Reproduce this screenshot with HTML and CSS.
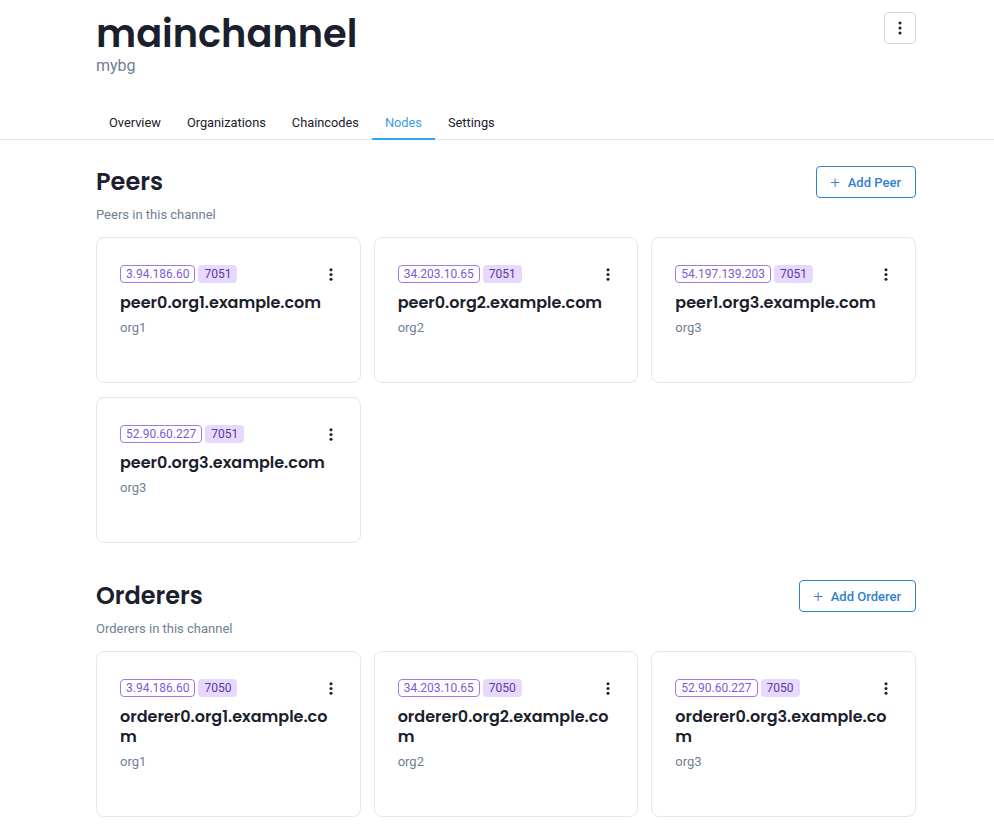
FILE: index.html
```html
<!DOCTYPE html>
<html>
<head>
<meta charset="utf-8">
<link rel="stylesheet" href="styles.css">
</head>
<body>
<header class="page-head">
  <div class="wrap head-row">
    <div>
      <h1 class="title">mainchannel</h1>
      <div class="subtitle">mybg</div>
    </div>
    <button class="menu-btn" aria-label="menu">
      <svg width="4" height="14" viewBox="0 0 4 14"><circle cx="2" cy="2" r="1.5" fill="#1a202c"/><circle cx="2" cy="7" r="1.5" fill="#1a202c"/><circle cx="2" cy="12" r="1.5" fill="#1a202c"/></svg>
    </button>
  </div>
  <nav class="tabs-bar">
    <div class="wrap tabs">
      <a class="tab">Overview</a>
      <a class="tab">Organizations</a>
      <a class="tab">Chaincodes</a>
      <a class="tab active">Nodes</a>
      <a class="tab">Settings</a>
    </div>
  </nav>
</header>

<main class="wrap">
  <section class="section">
    <div class="section-head">
      <div>
        <h2 class="section-title">Peers</h2>
        <div class="section-sub">Peers in this channel</div>
      </div>
      <button class="add-btn"><span class="plus">+</span>Add Peer</button>
    </div>
    <div class="grid">
      <div class="card">
        <div class="card-top"><div class="badges"><span class="badge-ip">3.94.186.60</span><span class="badge-port">7051</span></div><span class="kebab"><svg width="4" height="13" viewBox="0 0 4 13"><circle cx="2" cy="1.7" r="1.5"/><circle cx="2" cy="6.5" r="1.5"/><circle cx="2" cy="11.3" r="1.5"/></svg></span></div>
        <div class="node-name">peer0.org1.example.com</div>
        <div class="node-org">org1</div>
      </div>
      <div class="card">
        <div class="card-top"><div class="badges"><span class="badge-ip">34.203.10.65</span><span class="badge-port">7051</span></div><span class="kebab"><svg width="4" height="13" viewBox="0 0 4 13"><circle cx="2" cy="1.7" r="1.5"/><circle cx="2" cy="6.5" r="1.5"/><circle cx="2" cy="11.3" r="1.5"/></svg></span></div>
        <div class="node-name">peer0.org2.example.com</div>
        <div class="node-org">org2</div>
      </div>
      <div class="card">
        <div class="card-top"><div class="badges"><span class="badge-ip">54.197.139.203</span><span class="badge-port">7051</span></div><span class="kebab"><svg width="4" height="13" viewBox="0 0 4 13"><circle cx="2" cy="1.7" r="1.5"/><circle cx="2" cy="6.5" r="1.5"/><circle cx="2" cy="11.3" r="1.5"/></svg></span></div>
        <div class="node-name">peer1.org3.example.com</div>
        <div class="node-org">org3</div>
      </div>
      <div class="card">
        <div class="card-top"><div class="badges"><span class="badge-ip">52.90.60.227</span><span class="badge-port">7051</span></div><span class="kebab"><svg width="4" height="13" viewBox="0 0 4 13"><circle cx="2" cy="1.7" r="1.5"/><circle cx="2" cy="6.5" r="1.5"/><circle cx="2" cy="11.3" r="1.5"/></svg></span></div>
        <div class="node-name">peer0.org3.example.com</div>
        <div class="node-org">org3</div>
      </div>
    </div>
  </section>

  <section class="section">
    <div class="section-head">
      <div>
        <h2 class="section-title">Orderers</h2>
        <div class="section-sub">Orderers in this channel</div>
      </div>
      <button class="add-btn"><span class="plus">+</span>Add Orderer</button>
    </div>
    <div class="grid">
      <div class="card">
        <div class="card-top"><div class="badges"><span class="badge-ip">3.94.186.60</span><span class="badge-port">7050</span></div><span class="kebab"><svg width="4" height="13" viewBox="0 0 4 13"><circle cx="2" cy="1.7" r="1.5"/><circle cx="2" cy="6.5" r="1.5"/><circle cx="2" cy="11.3" r="1.5"/></svg></span></div>
        <div class="node-name">orderer0.org1.example.com</div>
        <div class="node-org">org1</div>
      </div>
      <div class="card">
        <div class="card-top"><div class="badges"><span class="badge-ip">34.203.10.65</span><span class="badge-port">7050</span></div><span class="kebab"><svg width="4" height="13" viewBox="0 0 4 13"><circle cx="2" cy="1.7" r="1.5"/><circle cx="2" cy="6.5" r="1.5"/><circle cx="2" cy="11.3" r="1.5"/></svg></span></div>
        <div class="node-name">orderer0.org2.example.com</div>
        <div class="node-org">org2</div>
      </div>
      <div class="card">
        <div class="card-top"><div class="badges"><span class="badge-ip">52.90.60.227</span><span class="badge-port">7050</span></div><span class="kebab"><svg width="4" height="13" viewBox="0 0 4 13"><circle cx="2" cy="1.7" r="1.5"/><circle cx="2" cy="6.5" r="1.5"/><circle cx="2" cy="11.3" r="1.5"/></svg></span></div>
        <div class="node-name">orderer0.org3.example.com</div>
        <div class="node-org">org3</div>
      </div>
    </div>
  </section>
</main>
</body>
</html>
```

FILE: styles.css
```css
* { box-sizing: border-box; }
html, body { margin: 0; padding: 0; background: #fff; }
body {
  font-family: Roboto, "Liberation Sans", sans-serif;
  color: #1a202c;
}
.wrap {
  padding-left: 96px;
  padding-right: 78px;
}
.head-row {
  display: flex;
  justify-content: space-between;
  align-items: flex-start;
  padding-top: 11px;
}
.title {
  margin: 0;
  font-family: Poppins, Inter, "DejaVu Sans", sans-serif;
  font-weight: 600;
  font-size: 38.3px;
  line-height: 46px;
  color: #1a202c;
}
.subtitle {
  font-size: 16px;
  line-height: 20px;
  color: #718096;
  margin-top: -1px;
}
.menu-btn {
  margin-top: 1px;
  width: 32px;
  height: 32px;
  border: 1px solid #cbd5e0;
  border-radius: 4px;
  background: #fff;
  display: flex;
  align-items: center;
  justify-content: center;
  padding: 0;
}
.tabs-bar {
  border-bottom: 1px solid #e2e8f0;
  margin-top: 29px;
}
.tabs {
  display: flex;
}
.tab {
  font-size: 12.8px;
  line-height: 20px;
  padding: 8px 13px 5px;
  color: #1a202c;
  border-bottom: 2px solid transparent;
  margin-bottom: -1px;
}
.tab.active {
  color: #3b9ee0;
  border-bottom-color: #2ea7f2;
}
.section { margin-top: 26px; }
.section + .section { margin-top: 37px; }
.section-head {
  display: flex;
  justify-content: space-between;
  align-items: flex-start;
}
.section-title {
  margin: 0;
  font-family: Poppins, Inter, "DejaVu Sans", sans-serif;
  font-weight: 600;
  font-size: 24px;
  line-height: 32px;
  color: #1a202c;
}
.section-sub {
  font-size: 13px;
  line-height: 18px;
  color: #718096;
  margin-top: 8px;
}
.add-btn {
  height: 32px;
  border: 1px solid #3182ce;
  border-radius: 4px;
  background: #fff;
  color: #3182ce;
  font-family: Roboto, "Liberation Sans", sans-serif;
  font-weight: 500;
  font-size: 13px;
  padding: 0 14px 0 13px;
  display: flex;
  align-items: center;
}
.plus {
  font-size: 17px;
  font-weight: 300;
  margin-right: 8px;
  line-height: 1;
}
.grid {
  display: grid;
  grid-template-columns: repeat(3, 1fr);
  gap: 14px 13px;
  margin-top: 13px;
}
.card {
  border: 1px solid #e2e8f0;
  border-radius: 8px;
  padding: 24px 23px 45px;
}
.card-top {
  display: flex;
  justify-content: space-between;
  align-items: center;
  height: 24px;
}
.badges { display: flex; gap: 3px; }
.badge-ip {
  font-size: 12px;
  line-height: 16px;
  color: #805ad5;
  border: 1px solid #9f7aea;
  border-radius: 4px;
  padding: 0 5px;
}
.badge-port {
  font-size: 12px;
  line-height: 18px;
  color: #553c9a;
  background: #e9d8fd;
  border-radius: 4px;
  padding: 0 6px;
}
.kebab {
  display: flex;
  margin-right: 4px;
  fill: #1a202c;
}
.node-name {
  margin-top: 7px;
  font-family: Poppins, Inter, "DejaVu Sans", sans-serif;
  font-weight: 600;
  font-size: 16px;
  line-height: 20px;
  word-break: break-all;
  color: #1a202c;
}
.node-org {
  margin-top: 6px;
  font-size: 13px;
  line-height: 18px;
  color: #718096;
}
```
